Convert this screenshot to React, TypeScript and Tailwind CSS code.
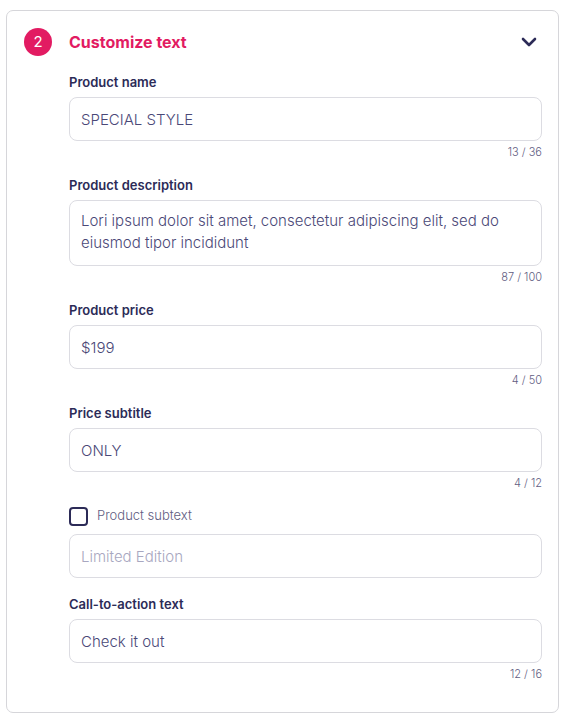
import { useState } from 'react';

const FONT = { fontFamily: 'Inter, "Noto Sans", "Liberation Sans", sans-serif' };

interface FieldProps {
  label: string;
  value: string;
  max: number;
  multiline?: boolean;
}

function Field({ label, value, max, multiline }: FieldProps) {
  const [text, setText] = useState(value);
  const boxClass =
    'block w-full rounded-[8px] border border-[#dcdce2] bg-white px-[11px] text-[15px] font-light text-[#4a4877] outline-none focus:border-[#a9a8c8]';

  return (
    <div>
      <label className="block text-[13px] leading-[18px] font-semibold text-[#2c2b57]">{label}</label>
      {multiline ? (
        <textarea
          value={text}
          onChange={(e) => setText(e.target.value)}
          maxLength={max}
          className={`${boxClass} mt-[6px] h-[66px] resize-none pt-[9px] leading-[22px]`}
        />
      ) : (
        <input
          value={text}
          onChange={(e) => setText(e.target.value)}
          maxLength={max}
          className={`${boxClass} mt-[6px] h-[44px]`}
        />
      )}
      <div className="mt-[4px] text-right text-[11px] leading-[14px] font-light text-[#5f5d82]">
        {text.length} / {max}
      </div>
    </div>
  );
}

export default function App() {
  const [showSubtext, setShowSubtext] = useState(false);

  return (
    <div style={FONT} className="min-h-screen bg-white pt-[10px] pl-[6px]">
      <div className="w-[553px] rounded-[7px] border border-[#d6d6da] pt-[17px] pr-[16px] pb-[31px] pl-[17px]">
        {/* Header */}
        <div className="flex h-7 items-center">
          <div className="flex h-7 w-7 items-center justify-center rounded-full bg-[#e21b62] text-[15px] text-white">
            2
          </div>
          <h2 className="ml-[17px] text-[16px] font-bold text-[#e21b62]">Customize text</h2>
          <button type="button" className="mr-[5px] ml-auto">
            <svg width="16" height="10" viewBox="0 0 16 10" fill="none">
              <path d="M2 2l6 6 6-6" stroke="#2c2b57" strokeWidth="2.6" strokeLinecap="round" strokeLinejoin="round" />
            </svg>
          </button>
        </div>

        {/* Fields */}
        <div className="mt-[17px] flex flex-col gap-[17px] pl-[45px]">
          <Field label="Product name" value="SPECIAL STYLE" max={36} />
          <Field
            label="Product description"
            value="Lori ipsum dolor sit amet, consectetur adipiscing elit, sed do eiusmod tipor incididunt"
            max={100}
            multiline
          />
          <Field label="Product price" value="$199" max={50} />
          <Field label="Price subtitle" value="ONLY" max={12} />

          <div>
            <label className="flex h-[18px] cursor-pointer items-center">
              <input
                type="checkbox"
                checked={showSubtext}
                onChange={(e) => setShowSubtext(e.target.checked)}
                className="peer sr-only"
              />
              <span className="box-border h-[19px] w-[19px] rounded-[4px] border-2 border-[#2c2b57] bg-white peer-checked:bg-[#2c2b57]" />
              <span className="ml-[9px] text-[13px] font-light text-[#5f5d82]">Product subtext</span>
            </label>
            <input
              disabled={!showSubtext}
              placeholder="Limited Edition"
              className="mt-[9px] block h-[44px] w-full rounded-[8px] border border-[#dcdce2] bg-white px-[11px] text-[15px] font-light text-[#4a4877] outline-none placeholder:text-[#a8a7c0]"
            />
          </div>

          <Field label="Call-to-action text" value="Check it out" max={16} />
        </div>
      </div>
    </div>
  );
}
